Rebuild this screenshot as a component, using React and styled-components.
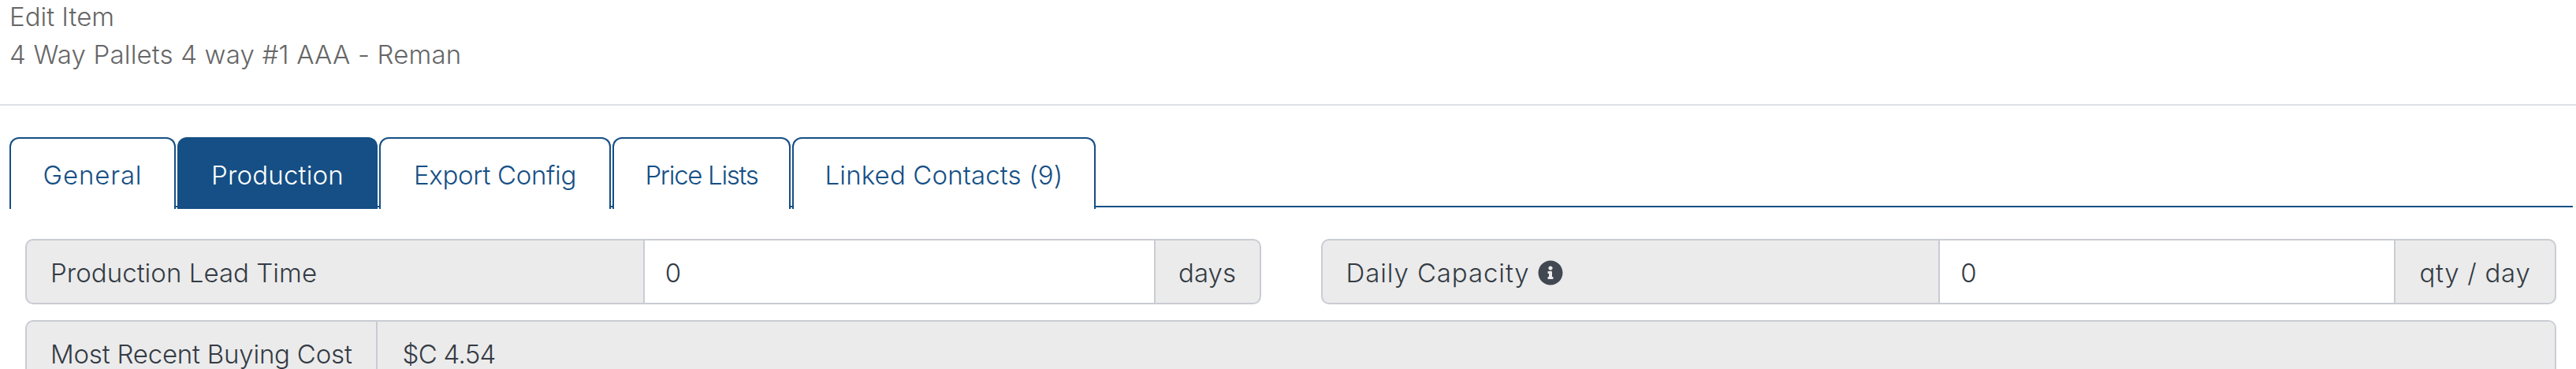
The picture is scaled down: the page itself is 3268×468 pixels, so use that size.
import React from "react";
import styled, { createGlobalStyle } from "styled-components";
import { FaInfoCircle } from "react-icons/fa";

const Global = createGlobalStyle`
  html, body { margin: 0; padding: 0; background: #fff; overflow: hidden; height: 468px; }
  body { font-family: Inter, Lato, sans-serif; font-size: 33px; font-weight: 300; line-height: 48px; }
`;

const Page = styled.div`
  width: 3268px;
  height: 468px;
  overflow: hidden;
  box-sizing: border-box;
`;

const Header = styled.header`
  display: flow-root;
  height: 132px;
  padding-left: 12px;
  border-bottom: 2px solid #dee2e6;
  color: #666;
`;

const HeaderText = styled.div`
  margin-top: -3px;
`;

const HeaderLine = styled.div`
  letter-spacing: ${(p) => p.$spacing};
`;

const TabBar = styled.nav`
  display: flex;
  align-items: flex-start;
  gap: 2px;
  height: 87px;
  margin: 40px 4px 0 12px;
  border-bottom: 2px solid #154f85;
`;

const Tab = styled.div`
  box-sizing: border-box;
  width: ${(p) => p.$width}px;
  height: 91px;
  flex: none;
  padding-top: 22px;
  text-align: center;
  letter-spacing: ${(p) => p.$spacing};
  border: 2px solid #154f85;
  border-bottom: none;
  border-radius: 12px 12px 0 0;
  color: ${(p) => (p.$active ? "#fff" : "#154f85")};
  background: ${(p) => (p.$active ? "#154f85" : "#fff")};
`;

const Form = styled.div`
  display: flex;
  flex-direction: column;
  gap: 20px;
  padding: 40px 25px 0 32px;
`;

const Row = styled.div`
  display: flex;
  gap: 76px;
`;

const Group = styled.div`
  flex: 1 1 0;
  display: flex;
  box-sizing: border-box;
  height: 83px;
  border: 2px solid #c9ccd3;
  border-radius: 10px;
  overflow: hidden;
  color: #343b44;
  background: #ebebeb;
`;

const Label = styled.div`
  box-sizing: border-box;
  flex: ${(p) => (p.$half ? "0 0 50%" : "none")};
  display: flex;
  align-items: center;
  gap: 10px;
  padding: 2px 30px 0;
  letter-spacing: ${(p) => p.$spacing};
  white-space: nowrap;
`;

const Value = styled.div`
  flex: 1;
  display: flex;
  align-items: center;
  padding: 2px ${(p) => (p.$readonly ? "32px" : "26px")} 0;
  border-left: 2px solid #c9ccd3;
  background: ${(p) => (p.$readonly ? "#ebebeb" : "#fff")};
  letter-spacing: ${(p) => p.$spacing};
`;

const Suffix = styled.div`
  flex: none;
  display: flex;
  align-items: center;
  justify-content: center;
  padding-top: 2px;
  width: ${(p) => p.$width}px;
  box-sizing: border-box;
  border-left: 2px solid #c9ccd3;
  letter-spacing: ${(p) => p.$spacing};
`;

const Info = styled(FaInfoCircle)`
  width: 32px;
  height: 32px;
  flex: none;
  color: #414851;
`;

export default function App() {
  return (
    <Page>
      <Global />
      <Header>
        <HeaderText>
          <HeaderLine $spacing="0">Edit Item</HeaderLine>
          <HeaderLine $spacing="0.18px">4 Way Pallets 4 way #1 AAA - Reman</HeaderLine>
        </HeaderText>
      </Header>
      <TabBar>
        <Tab $width={211} $spacing="0.85px">General</Tab>
        <Tab $width={254} $active $spacing="0.2px">Production</Tab>
        <Tab $width={294} $spacing="-0.3px">Export Config</Tab>
        <Tab $width={226} $spacing="-1.3px">Price Lists</Tab>
        <Tab $width={385} $spacing="0.15px">Linked Contacts (9)</Tab>
      </TabBar>
      <Form>
        <Row>
          <Group>
            <Label $half $spacing="0.05px">Production Lead Time</Label>
            <Value>0</Value>
            <Suffix $width={134} $spacing="0">days</Suffix>
          </Group>
          <Group>
            <Label $half $spacing="0.9px">
              Daily Capacity
              <Info />
            </Label>
            <Value>0</Value>
            <Suffix $width={204} $spacing="0.7px">qty / day</Suffix>
          </Group>
        </Row>
        <Row>
          <Group>
            <Label $spacing="-0.2px">Most Recent Buying Cost</Label>
            <Value $readonly $spacing="-0.7px">$C 4.54</Value>
          </Group>
        </Row>
      </Form>
    </Page>
  );
}
